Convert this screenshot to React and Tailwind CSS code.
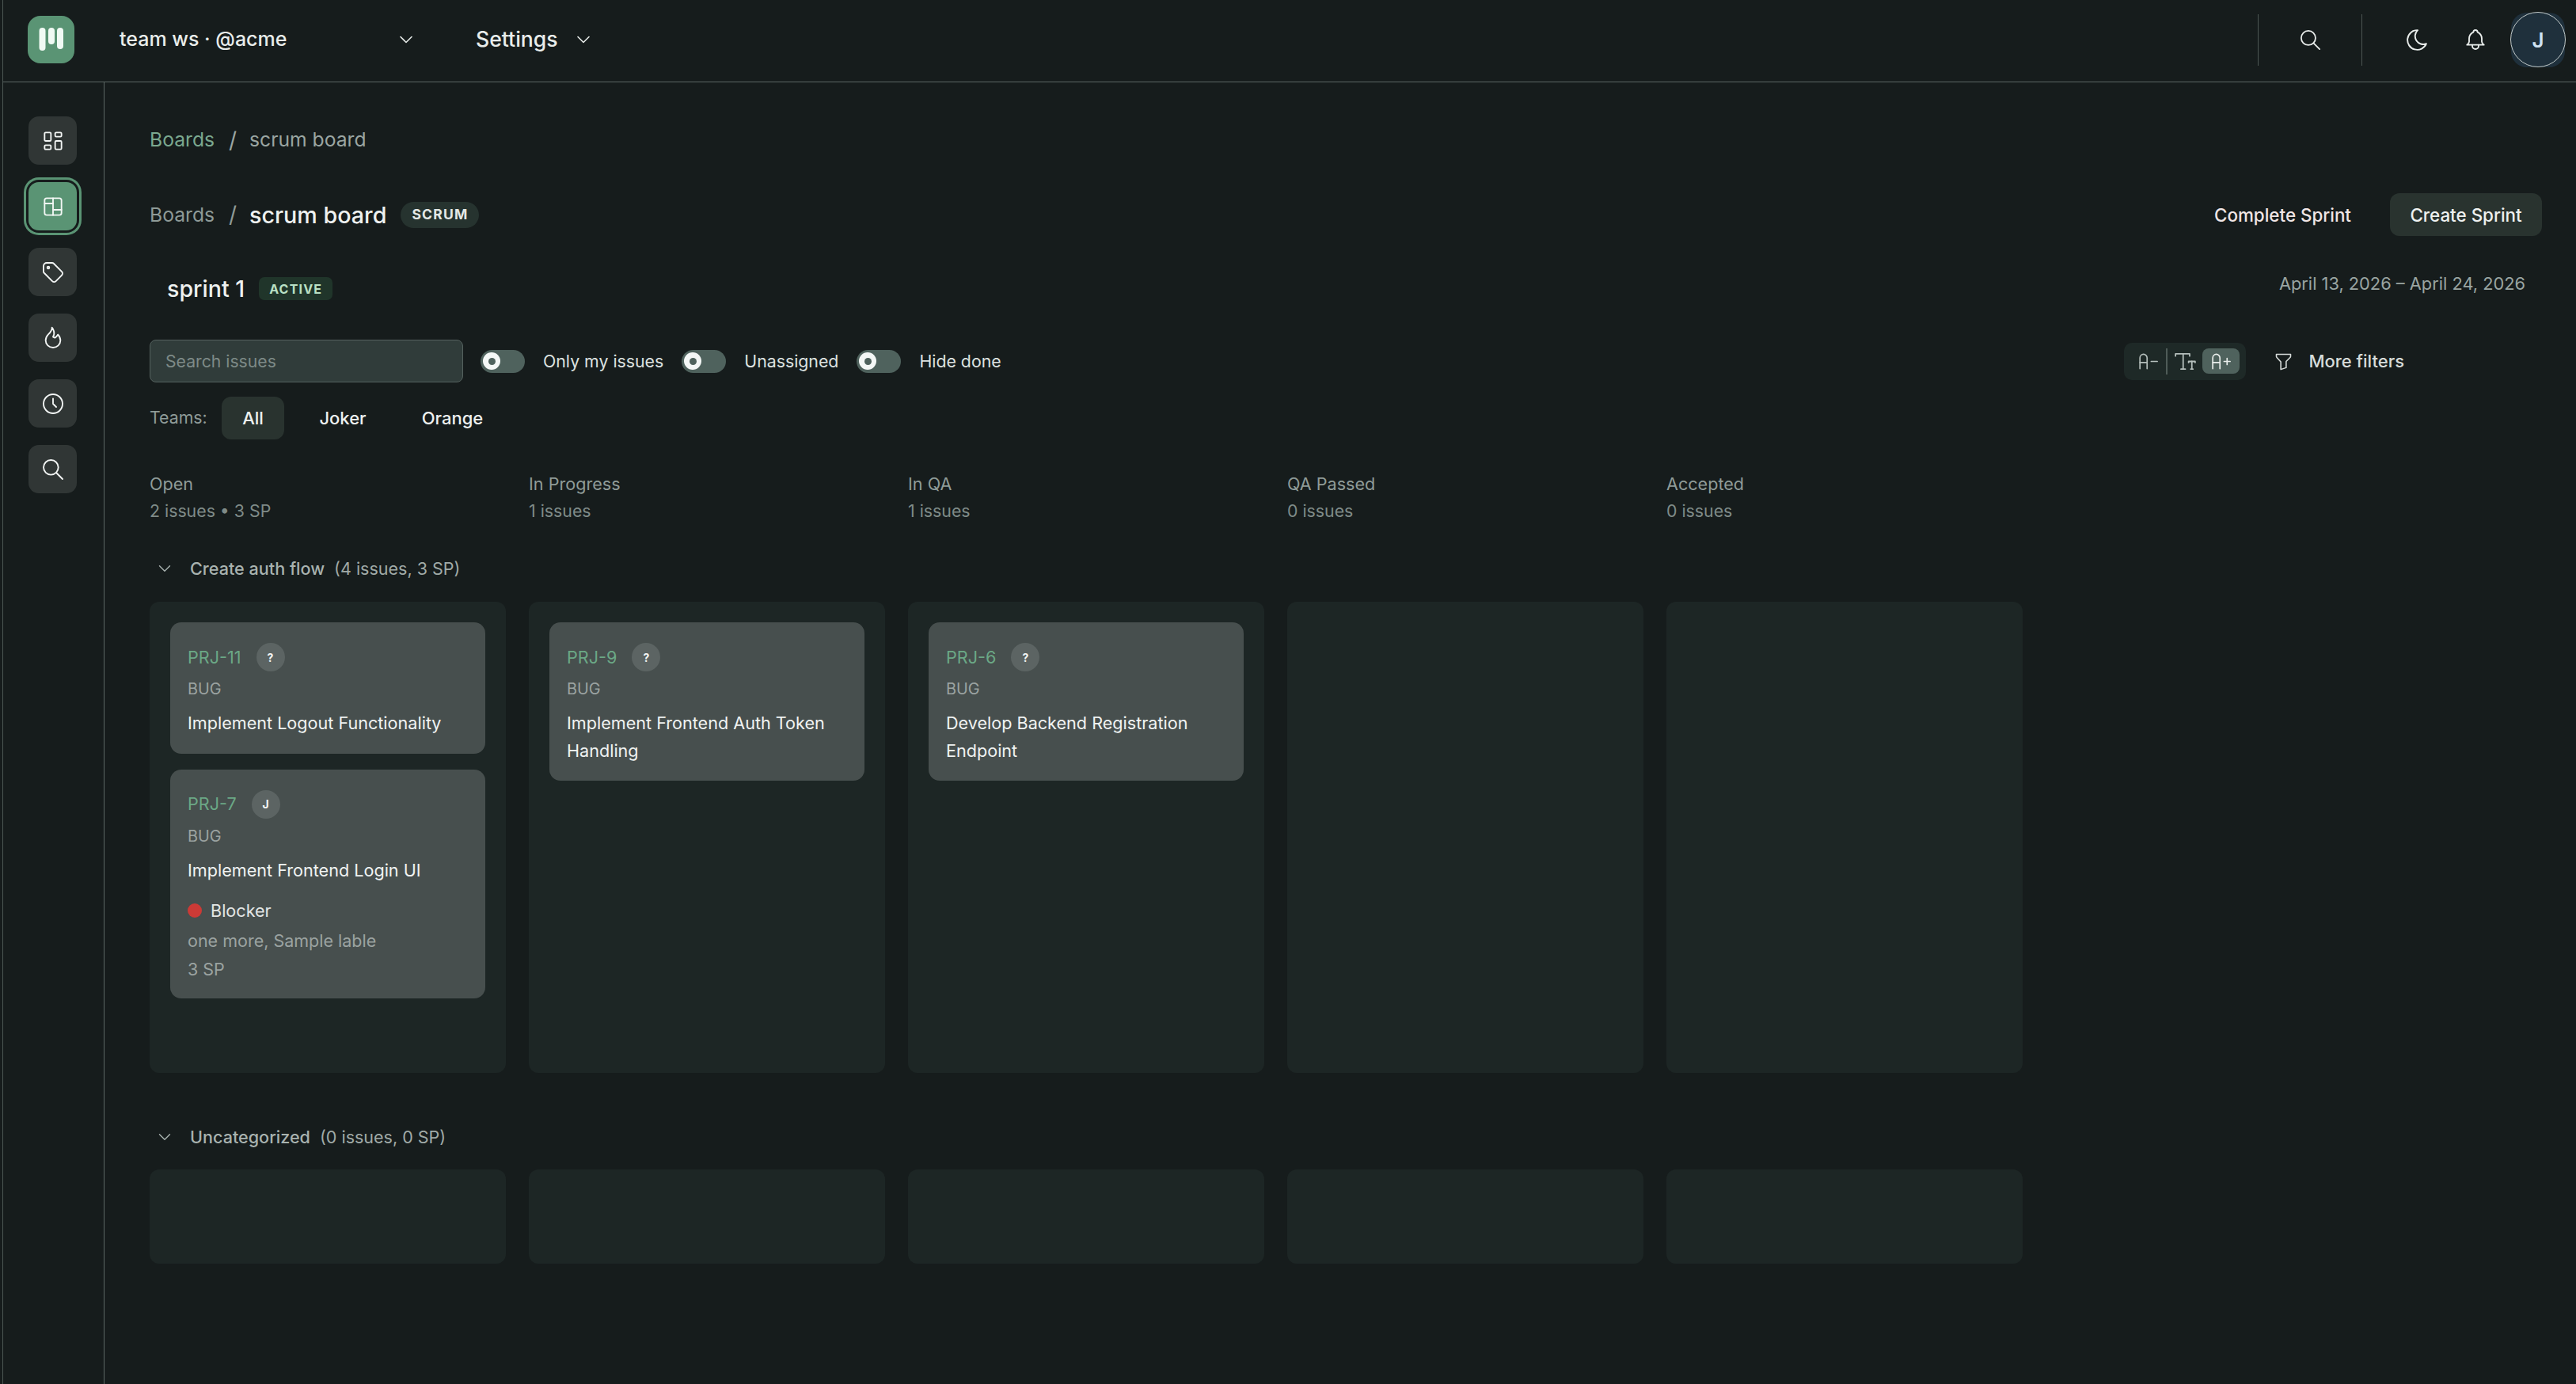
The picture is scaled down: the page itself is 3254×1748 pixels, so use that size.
import React from "react";
import {
  TbChevronDown,
  TbSearch,
  TbMoon,
  TbBell,
  TbLayoutDashboard,
  TbLayoutBoard,
  TbTag,
  TbFlame,
  TbClock,
  TbFilter,
  TbTextDecrease,
  TbTextIncrease,
  TbTextSize,
} from "react-icons/tb";

function Logo() {
  return (
    <div className="w-[59px] h-[60px] rounded-[16px] bg-[#5a9474] flex items-center justify-center shrink-0">
      <svg width="59" height="60" viewBox="0 0 59 60">
        <rect x="14.5" y="15" width="8" height="29" rx="4" fill="#f0faf4" />
        <rect x="26" y="15" width="8" height="21" rx="4" fill="#f0faf4" />
        <rect x="37" y="15" width="8" height="27" rx="4" fill="#f0faf4" />
      </svg>
    </div>
  );
}

function Header() {
  return (
    <header className="h-[104px] shrink-0 border-b border-[#5c6764] flex items-center pl-[31px] pr-[13px] pb-[3px]">
      <Logo />
      <span className="ml-[57px] w-[348px] text-[25px] font-medium text-[#e9edeb] whitespace-nowrap">team ws · @acme</span>
      <TbChevronDown size={28} strokeWidth={1.4} className="text-[#e4e8e6]" />
      <span className="ml-[74px] text-[26.6px] font-medium text-[#e9edeb]">Settings</span>
      <TbChevronDown size={28} strokeWidth={1.4} className="ml-[18px] text-[#e4e8e6]" />
      <div className="ml-auto flex items-center h-[66px]">
        <div className="w-px h-[65px] bg-[#4c5653]" />
        <div className="w-[130px] flex justify-center">
          <TbSearch size={31} strokeWidth={1.4} className="text-[#e9edeb]" />
        </div>
        <div className="w-px h-[65px] bg-[#4c5653]" />
        <TbMoon size={33} strokeWidth={1.4} className="ml-[53px] text-[#e9edeb]" />
        <TbBell size={32} strokeWidth={1.4} className="ml-[41px] text-[#e9edeb]" />
        <div className="relative ml-[28px] w-[70px] h-[70px] flex items-center justify-center">
          <div className="w-[68px] h-[69px] rounded-[20px] bg-[#1f303c] flex items-center justify-center text-[26px] font-semibold text-[#cfe2f2]">J</div>
          <div className="absolute inset-0 rounded-full border border-[#c3cbca]" />
        </div>
      </div>
    </header>
  );
}

const navItems = [
  { Icon: TbLayoutDashboard },
  { Icon: TbLayoutBoard, active: true },
  { Icon: TbTag },
  { Icon: TbFlame },
  { Icon: TbClock },
  { Icon: TbSearch },
];

function Sidebar() {
  return (
    <aside className="w-[128px] shrink-0 border-r border-[#5c6764] pl-[32px] pt-[43px] flex flex-col gap-[22px]">
      {navItems.map(({ Icon, active }, i) => (
        <div
          key={i}
          className={
            active
              ? "w-[61px] h-[61px] rounded-[13px] bg-[#5a9474] ring-[3px] ring-[#5a9474] ring-offset-[3px] ring-offset-[#161c1c] flex items-center justify-center text-[#f2f7f4]"
              : "w-[61px] h-[61px] rounded-[13px] bg-[#303635] flex items-center justify-center text-[#f2f5f4]"
          }
        >
          <Icon size={32} strokeWidth={1.4} />
        </div>
      ))}
    </aside>
  );
}

function Toggle({ label }) {
  return (
    <div className="flex items-center gap-[23px]">
      <div className="w-[56px] h-[29px] rounded-full bg-[#4f625d] flex items-center pl-[3px]">
        <div className="w-[22px] h-[22px] rounded-full bg-[#f4f7f6] flex items-center justify-center">
          <div className="w-[9px] h-[9px] rounded-full bg-[#4f625d]" />
        </div>
      </div>
      <span className="pt-[1px] text-[21.3px] text-[#dde2e0] whitespace-nowrap">{label}</span>
    </div>
  );
}

function Toolbar() {
  return (
    <div className="mt-[40px] h-[54px] flex items-center justify-between pr-[174px]">
      <div className="flex items-center gap-[23px]">
        <input
          readOnly
          placeholder="Search issues"
          className="-mr-[1px] w-[396px] h-[54px] rounded-[8px] bg-[#303c3a] border border-[#55625f] px-[19px] text-[21.2px] placeholder:text-[#7d8a87] outline-none"
        />
        <Toggle label="Only my issues" />
        <Toggle label="Unassigned" />
        <Toggle label="Hide done" />
      </div>
      <div className="flex items-center">
        <div className="w-[154px] h-[47px] rounded-[10px] bg-[#1e2927] flex items-center pl-[15px] text-[#b5bfbc]">
          <TbTextDecrease size={31} strokeWidth={1.3} />
          <div className="ml-[7px] w-[2px] h-[33px] bg-[#4f5c58]" />
          <TbTextSize size={33} strokeWidth={1.3} className="ml-[6px]" />
          <div className="ml-[5px] w-[47px] h-[32px] rounded-[8px] bg-[#4f625d] flex items-center justify-center text-[#e9edeb]">
            <TbTextIncrease size={31} strokeWidth={1.3} />
          </div>
        </div>
        <TbFilter size={27} strokeWidth={1.4} className="ml-[34px] text-[#d7dcda]" />
        <span className="ml-[18px] text-[22px] font-medium text-[#d7dcda] whitespace-nowrap">More filters</span>
      </div>
    </div>
  );
}

function Teams() {
  return (
    <div className="mt-[18px] h-[54px] flex items-center">
      <span className="w-[91px] text-[21.3px] text-[#8f9b98]">Teams:</span>
      <div className="flex items-center gap-[19px]">
        <div className="h-[54px] w-[79px] rounded-[12px] bg-[#29332f] flex items-center justify-center text-[22px] font-medium text-[#eef1f0]">All</div>
        <div className="h-[54px] w-[110px] flex items-center justify-center text-[22px] font-medium text-[#eef1f0]">Joker</div>
        <div className="h-[54px] w-[129px] flex items-center justify-center text-[22px] font-medium text-[#eef1f0]">Orange</div>
      </div>
    </div>
  );
}

const columns = [
  { name: "Open", sub: "2 issues • 3 SP" },
  { name: "In Progress", sub: "1 issues" },
  { name: "In QA", sub: "1 issues" },
  { name: "QA Passed", sub: "0 issues" },
  { name: "Accepted", sub: "0 issues" },
];

function ColumnHeaders() {
  return (
    <div className="mt-[39px] grid grid-cols-[repeat(5,450px)] gap-x-[29px]">
      {columns.map((c) => (
        <div key={c.name}>
          <div className="h-[34px] leading-[34px] text-[21.6px] text-[#8f9b98]">{c.name}</div>
          <div className="h-[34px] leading-[34px] text-[21.3px] text-[#7f8b88]">{c.sub}</div>
        </div>
      ))}
    </div>
  );
}

function GroupHeader({ title, meta, className }) {
  return (
    <div className={"h-[34px] flex items-center pl-[6px] " + className}>
      <TbChevronDown size={26} strokeWidth={1.3} className="text-[#a8b2af]" />
      <span className="ml-[19px] text-[21.6px] font-medium text-[#a8b2af] whitespace-nowrap">{title}</span>
      <span className="ml-[12px] text-[21.5px] text-[#a0aaa7] whitespace-nowrap">{meta}</span>
    </div>
  );
}

function Card({ id, who, title, blocker, labels, sp }) {
  return (
    <div className={"rounded-[14px] bg-[#474f4e] px-[22px] pt-[26px] " + (sp ? "pb-[20px]" : "pb-[21px]")}>
      <div className="h-[36px] flex items-center gap-[19px]">
        <span className="text-[21.6px] text-[#6ba886]">{id}</span>
        <div className="w-[36px] h-[36px] rounded-full bg-[#5c6463] flex items-center justify-center text-[14px] font-bold text-[#f4f6f5]">{who}</div>
      </div>
      <div className="mt-[7px] h-[30px] leading-[30px] text-[19.9px] text-[#9ba3a1]">BUG</div>
      <div className="mt-[11px] leading-[34.5px] text-[21.6px] text-[#f0f3f2]">{title}</div>
      {blocker && (
        <div className="mt-[17px] h-[34px] flex items-center gap-[11px]">
          <div className="w-[18px] h-[18px] rounded-full bg-[#cc3a36]" />
          <span className="text-[21.6px] text-[#e3e6e5]">Blocker</span>
        </div>
      )}
      {labels && <div className="mt-[4px] leading-[34px] text-[21.5px] text-[#9ba3a1]">{labels}</div>}
      {sp && <div className="mt-[2px] leading-[34px] text-[21.5px] text-[#9ba3a1]">{sp}</div>}
    </div>
  );
}

function Panel({ children, h }) {
  return (
    <div className={"rounded-[12px] bg-[#1d2625] " + h}>
      {children && <div className="p-[26px] flex flex-col gap-[20px]">{children}</div>}
    </div>
  );
}

function Board() {
  return (
    <div className="mt-[25px] grid grid-cols-[repeat(5,450px)] gap-x-[29px]">
      <Panel h="h-[595px]">
        <Card id="PRJ-11" who="?" title="Implement Logout Functionality" />
        <Card id="PRJ-7" who="J" title="Implement Frontend Login UI" blocker labels="one more, Sample lable" sp="3 SP" />
      </Panel>
      <Panel h="h-[595px]">
        <Card id="PRJ-9" who="?" title="Implement Frontend Auth Token Handling" />
      </Panel>
      <Panel h="h-[595px]">
        <Card id="PRJ-6" who="?" title="Develop Backend Registration Endpoint" />
      </Panel>
      <Panel h="h-[595px]" />
      <Panel h="h-[595px]" />
    </div>
  );
}

function Uncategorized() {
  return (
    <div className="mt-[24px] grid grid-cols-[repeat(5,450px)] gap-x-[29px]">
      {[0, 1, 2, 3, 4].map((i) => (
        <Panel key={i} h="h-[119px]" />
      ))}
    </div>
  );
}

export default function App() {
  return (
    <div className="w-[3254px] h-[1748px] overflow-hidden bg-[#161c1c] pl-[3px] font-['Inter',sans-serif]">
      <div className="h-full border-l border-[#4c5653] flex flex-col">
        <Header />
        <div className="flex flex-1 min-h-0">
          <Sidebar />
          <main className="flex-1 pl-[57px] pr-[43px] pt-[56px]">
            <div className="h-[34px] flex items-center text-[24.7px]">
              <span className="w-[100px] text-[#7ba88f]">Boards</span>
              <span className="w-[26px] text-[28px] text-[#9aa5a2]">/</span>
              <span className="text-[#9aa5a2]">scrum board</span>
            </div>
            <div className="mt-[50px] h-[54px] flex items-center justify-between">
              <div className="flex items-center pt-[1px]">
                <span className="w-[100px] text-[24.7px] text-[#8e9a97]">Boards</span>
                <span className="w-[26px] text-[28px] text-[#8e9a97]">/</span>
                <span className="text-[28.7px] font-medium text-[#eef1f0]">scrum board</span>
                <span className="ml-[18px] h-[33px] px-[14px] rounded-full bg-[#26332f] flex items-center text-[17.5px] font-bold tracking-[1.2px] text-[#e4e8e6]">SCRUM</span>
              </div>
              <div className="flex items-center">
                <span className="pt-[1px] text-[22.4px] font-medium text-[#f0e6e6] whitespace-nowrap">Complete Sprint</span>
                <span className="ml-[49px] pt-[1px] h-[54px] w-[192px] rounded-[12px] bg-[#29332f] flex items-center justify-center text-[22.4px] font-medium text-[#eef1f0] whitespace-nowrap">Create Sprint</span>
              </div>
            </div>
            <div className="mt-[43px] h-[48px] flex items-start justify-between pl-[22px] pr-[21px]">
              <div className="h-[48px] flex items-center">
                <span className="text-[28.6px] font-medium text-[#eef1f0]">sprint 1</span>
                <span className="ml-[18px] -mt-[1px] h-[29px] px-[13px] rounded-[7px] bg-[#20352a] flex items-center text-[16px] font-bold tracking-[1.2px] text-[#b9e0c4]">ACTIVE</span>
              </div>
              <span className="leading-[34px] text-[21.8px] text-[#9aa5a2] whitespace-nowrap">April 13, 2026 – April 24, 2026</span>
            </div>
            <Toolbar />
            <Teams />
            <ColumnHeaders />
            <GroupHeader title="Create auth flow" meta="(4 issues, 3 SP)" className="mt-[39px]" />
            <Board />
            <GroupHeader title="Uncategorized" meta="(0 issues, 0 SP)" className="mt-[64px]" />
            <Uncategorized />
          </main>
        </div>
      </div>
    </div>
  );
}
